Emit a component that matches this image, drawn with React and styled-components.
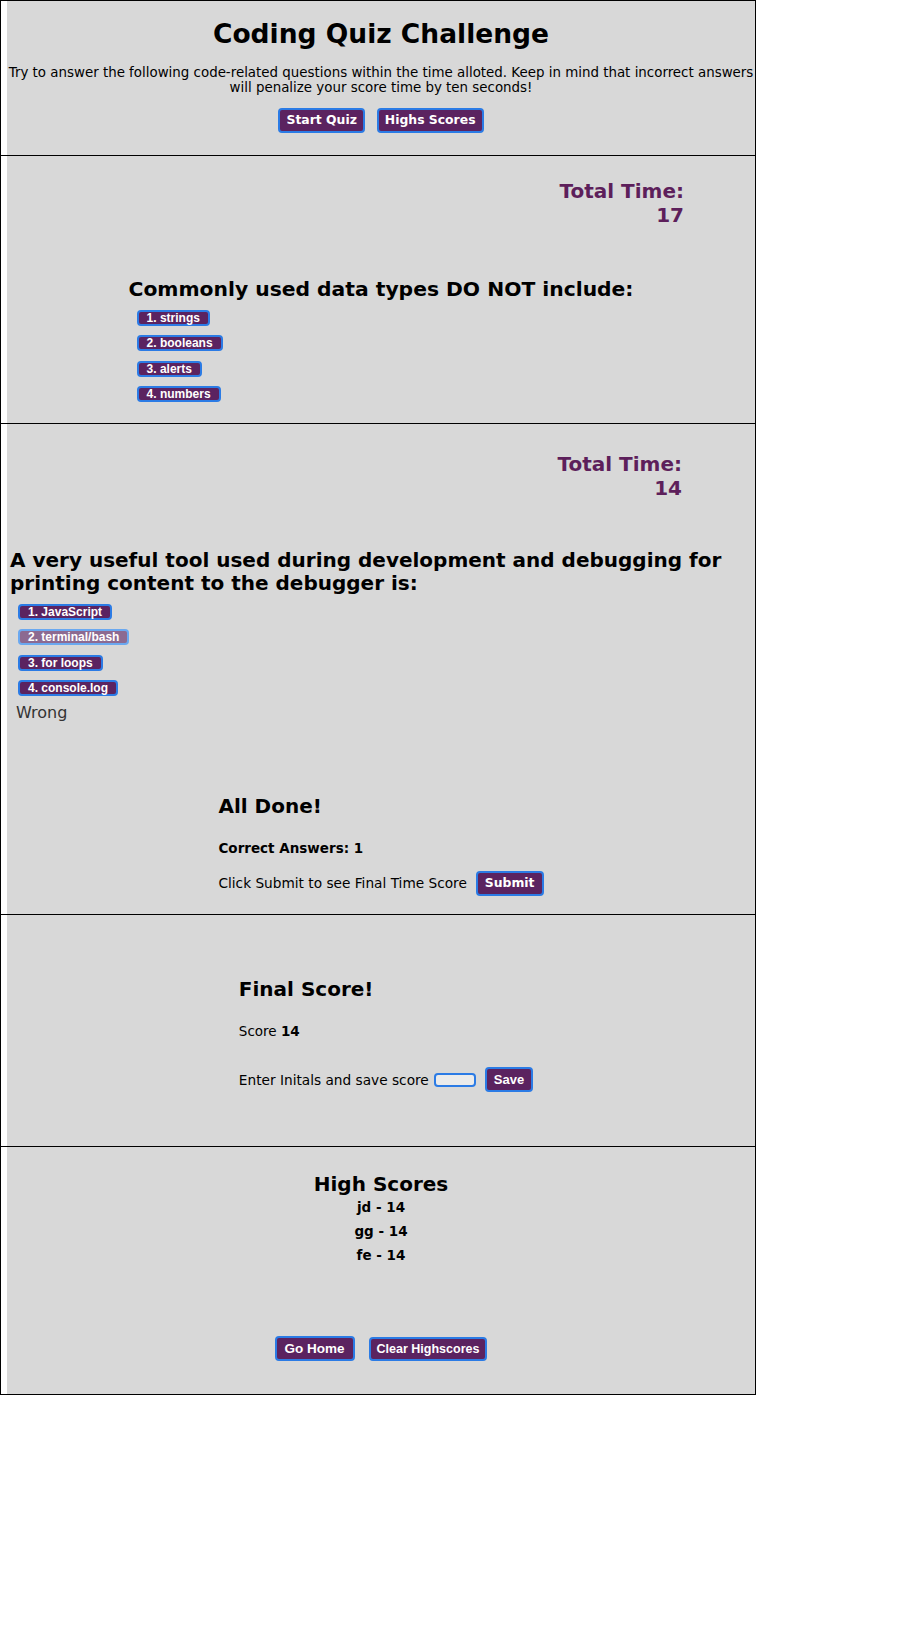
import React from "react";
import styled, { createGlobalStyle } from "styled-components";

const purple = "#5b2360";
const blue = "#2b7be5";
const verdana = '"DejaVu Sans", Verdana, sans-serif';
const arial = '"Liberation Sans", Arial, sans-serif';

const GlobalStyle = createGlobalStyle`
  body {
    margin: 0;
    background: #fff;
    font-family: ${verdana};
    font-size: 13.5px;
    color: #000;
  }
`;

const Page = styled.div`
  width: 754px;
  border: 1px solid #000;
`;

const Section = styled.section`
  box-sizing: border-box;
  display: flow-root;
  height: ${({ $h }) => $h}px;
  padding-left: 6px;
  background: linear-gradient(to right, #fff 6px, #d8d8d8 6px);
  & + & {
    border-top: 1px solid #000;
  }
`;

const Title = styled.h1`
  margin: 17px 0 0;
  font-size: 26.5px;
  line-height: 31px;
  text-align: center;
`;

const Intro = styled.p`
  margin: 16px 0 0;
  font-size: 13.4px;
  line-height: 15px;
  text-align: center;
  white-space: nowrap;
`;

const ButtonRow = styled.div`
  display: flex;
  justify-content: center;
  align-items: flex-end;
  gap: ${({ $gap }) => $gap}px;
  margin-top: ${({ $top }) => $top}px;
`;

const Button = styled.button`
  box-sizing: border-box;
  height: ${({ $h }) => $h || 25}px;
  padding: 0 ${({ $pad }) => $pad ?? 6}px;
  border: 2px solid ${blue};
  border-radius: 4px;
  background: ${purple};
  color: #fff;
  font-family: ${({ $arial }) => ($arial ? arial : verdana)};
  font-weight: bold;
  font-size: ${({ $size }) => $size || 12.4}px;
  line-height: 1;
  cursor: pointer;
`;

const Timer = styled.h2`
  margin: ${({ $top }) => $top}px 0 0;
  padding-right: ${({ $right }) => $right}px;
  text-align: right;
  color: #5d1f5b;
  font-size: 20px;
  line-height: 24px;
`;

const QuizBox = styled.div`
  box-sizing: border-box;
  width: fit-content;
  max-width: 100%;
  margin: ${({ $top }) => $top}px auto 0;
  padding: 0 3px;
`;

const Heading = styled.h2`
  margin: ${({ $top }) => $top || 0}px 0 0;
  font-size: ${({ $size }) => $size || 20}px;
  line-height: 23px;
`;

const Answers = styled.div`
  display: flex;
  flex-direction: column;
  align-items: flex-start;
  gap: 9.6px;
  margin: 8.5px 0 0 8px;
`;

const Answer = styled.button`
  box-sizing: border-box;
  height: 16px;
  padding: 0 8px;
  border: 2px solid ${({ $hover }) => ($hover ? "#6aa8f0" : blue)};
  border-radius: 4px;
  background: ${({ $hover }) => ($hover ? "#8c6a91" : purple)};
  color: #fff;
  font: bold 12px/1 ${arial};
  cursor: pointer;
`;

const Feedback = styled.div`
  margin: 7px 0 0 6px;
  font-size: 16px;
  color: #333;
`;

const Block = styled.div`
  width: fit-content;
  margin: ${({ $top }) => $top}px auto 0;
  padding-left: ${({ $shift }) => $shift || 0}px;
`;

const Line = styled.div`
  margin-top: ${({ $top }) => $top}px;
  line-height: 15.5px;
  font-weight: ${({ $bold }) => ($bold ? "bold" : "normal")};
`;

const InlineRow = styled.div`
  display: flex;
  align-items: center;
  margin-top: ${({ $top }) => $top}px;
  gap: ${({ $gap }) => $gap}px;
  font-size: 13.7px;
`;

const Initials = styled.input`
  box-sizing: border-box;
  width: 42px;
  height: 14px;
  margin: 0 9px 0 5px;
  padding: 0;
  border: 2px solid ${blue};
  border-radius: 4px;
  background: #ebebeb;
`;

const Center = styled.div`
  text-align: center;
`;

const ScoreList = styled.div`
  display: flex;
  flex-direction: column;
  gap: 8px;
  margin-top: 3.3px;
  font-weight: bold;
  line-height: 16px;
`;

function Question({ top, timer, right, qTop, size, text, answers, hover, children }) {
  return (
    <>
      <Timer $top={top} $right={right}>
        Total Time:
        <br />
        {timer}
      </Timer>
      <QuizBox $top={qTop}>
        <Heading $size={size}>{text}</Heading>
        <Answers>
          {answers.map((a, i) => (
            <Answer key={a} $hover={hover === i}>
              {i + 1}. {a}
            </Answer>
          ))}
        </Answers>
        {children}
      </QuizBox>
    </>
  );
}

export default function App() {
  return (
    <>
      <GlobalStyle />
      <Page>
        <Section $h={154}>
          <Title>Coding Quiz Challenge</Title>
          <Intro>
            Try to answer the following code-related questions within the time alloted. Keep in mind that incorrect answers
            <br />
            will penalize your score time by ten seconds!
          </Intro>
          <ButtonRow $top={13} $gap={12}>
            <Button>Start Quiz</Button>
            <Button>Highs Scores</Button>
          </ButtonRow>
        </Section>

        <Section $h={268}>
          <Question
            top={23}
            right={71}
            timer="17"
            qTop={51}
            size={20.3}
            text="Commonly used data types DO NOT include:"
            answers={["strings", "booleans", "alerts", "numbers"]}
          />
        </Section>

        <Section $h={491}>
          <Question
            top={27.5}
            right={73}
            timer="14"
            qTop={49.5}
            text="A very useful tool used during development and debugging for printing content to the debugger is:"
            answers={["JavaScript", "terminal/bash", "for loops", "console.log"]}
            hover={1}
          >
            <Feedback>Wrong</Feedback>
          </Question>
          <Block $top={73}>
            <Heading>All Done!</Heading>
            <Line $top={22.5} $bold>
              Correct Answers: 1
            </Line>
            <InlineRow $top={14.5} $gap={9}>
              <span>Click Submit to see Final Time Score</span>
              <Button $pad={7}>Submit</Button>
            </InlineRow>
          </Block>
        </Section>

        <Section $h={232}>
          <Block $top={63} $shift={10}>
            <Heading>Final Score!</Heading>
            <Line $top={23}>
              Score <b>14</b>
            </Line>
            <InlineRow $top={27.5} $gap={0}>
              <span>Enter Initals and save score</span>
              <Initials type="text" />
              <Button $arial $size={13} $pad={7}>
                Save
              </Button>
            </InlineRow>
          </Block>
        </Section>

        <Section $h={248}>
          <Center>
            <Heading $top={25.7}>High Scores</Heading>
            <ScoreList>
              <div>jd - 14</div>
              <div>gg - 14</div>
              <div>fe - 14</div>
            </ScoreList>
          </Center>
          <ButtonRow $top={73} $gap={14}>
            <Button $arial $size={13.5} $pad={8}>
              Go Home
            </Button>
            <Button $arial $size={12.5} $h={24} $pad={6}>
              Clear Highscores
            </Button>
          </ButtonRow>
        </Section>
      </Page>
    </>
  );
}
